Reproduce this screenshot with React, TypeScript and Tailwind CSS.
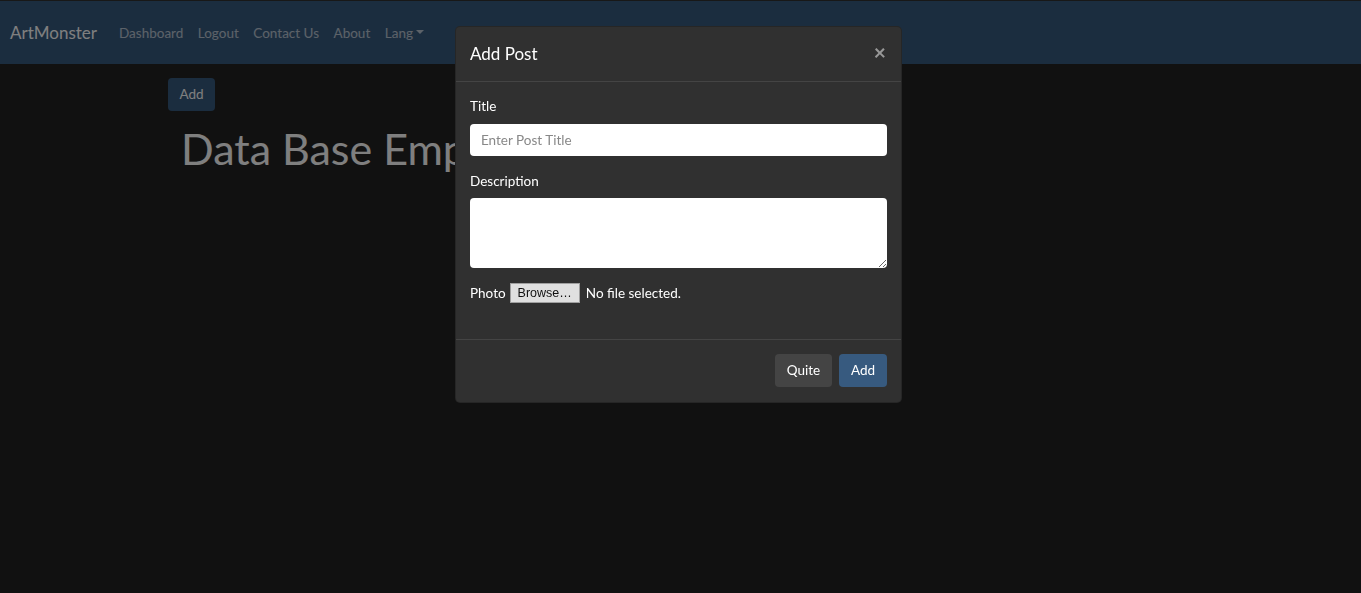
const navLinks = ["Dashboard", "Logout", "Contact Us", "About"]

function Navbar() {
    return (
        <nav className="h-[63px] bg-[#375a7f] flex items-center pl-[10px]">
            <span className="text-[17px] text-white mr-[22px]">ArtMonster</span>
            <div className="flex items-center gap-[14.5px] text-[13.5px] text-white/65 pt-[1px]">
                {navLinks.map(l => (
                    <span key={l}>{l}</span>
                ))}
                <span className="flex items-center">
                    Lang
                    <span className="ml-[3px] mb-[3px] border-x-[4px] border-t-[4px] border-x-transparent border-t-white/65" />
                </span>
            </div>
        </nav>
    )
}

function Modal() {
    return (
        <div className="fixed left-[455px] top-[26px] w-[447px] bg-[#303030] border border-black/20 rounded-[5px] text-white">
            <div className="h-[55px] flex items-center justify-between px-[14px] border-b border-[#444]">
                <h5 className="text-[17px]">Add Post</h5>
                <span className="text-[21px] font-bold text-white/50 leading-none mr-[1px] mb-[6px]">×</span>
            </div>
            <div className="px-[14px] pt-[13px] pb-[35px] text-[13.5px]">
                <label className="block h-[22px] leading-[22px]">Title</label>
                <input
                    placeholder="Enter Post Title"
                    className="mt-[7px] w-full h-[32px] rounded-[4px] bg-white px-[11px] text-[13.5px] text-[#222] placeholder:text-[#888] outline-none"
                />
                <label className="block mt-[14px] h-[22px] leading-[22px]">Description</label>
                <textarea className="block mt-[6px] w-full h-[70px] rounded-[4px] bg-white text-[#222] outline-none" />
                <div className="mt-[14px] h-[22px] flex items-center">
                    <span>Photo</span>
                    <span className="ml-[4px] h-[20px] px-[7px] bg-[#e0e0e0] border border-[#a0a0a0] text-[#111] text-[12.5px] leading-[18px] font-['Liberation_Sans',sans-serif]">Browse…</span>
                    <span className="ml-[6px]">No file selected.</span>
                </div>
            </div>
            <div className="border-t border-[#444] flex justify-end gap-[7px] px-[14px] pt-[14px] pb-[15px]">
                <button className="h-[33px] w-[57px] rounded-[4px] bg-[#444] text-[13.5px] text-white">Quite</button>
                <button className="h-[33px] w-[48px] rounded-[4px] bg-[#375a7f] text-[13.5px] text-white">Add</button>
            </div>
        </div>
    )
}

export default function App() {
    return (
        <div className="min-h-[593px] bg-[#222] border-t border-[#303030] font-['Lato','Open_Sans',sans-serif]">
            <Navbar />
            <div className="pl-[168px] pt-[14px]">
                <button className="h-[33px] w-[47px] rounded-[4px] bg-[#375a7f] text-white text-[13.5px]">Add</button>
                <h1 className="mt-[12px] ml-[13px] text-[43px] leading-[1.2] text-white whitespace-nowrap">Data Base Employees</h1>
            </div>
            <div className="fixed inset-0 bg-black/50" />
            <Modal />
        </div>
    )
}
